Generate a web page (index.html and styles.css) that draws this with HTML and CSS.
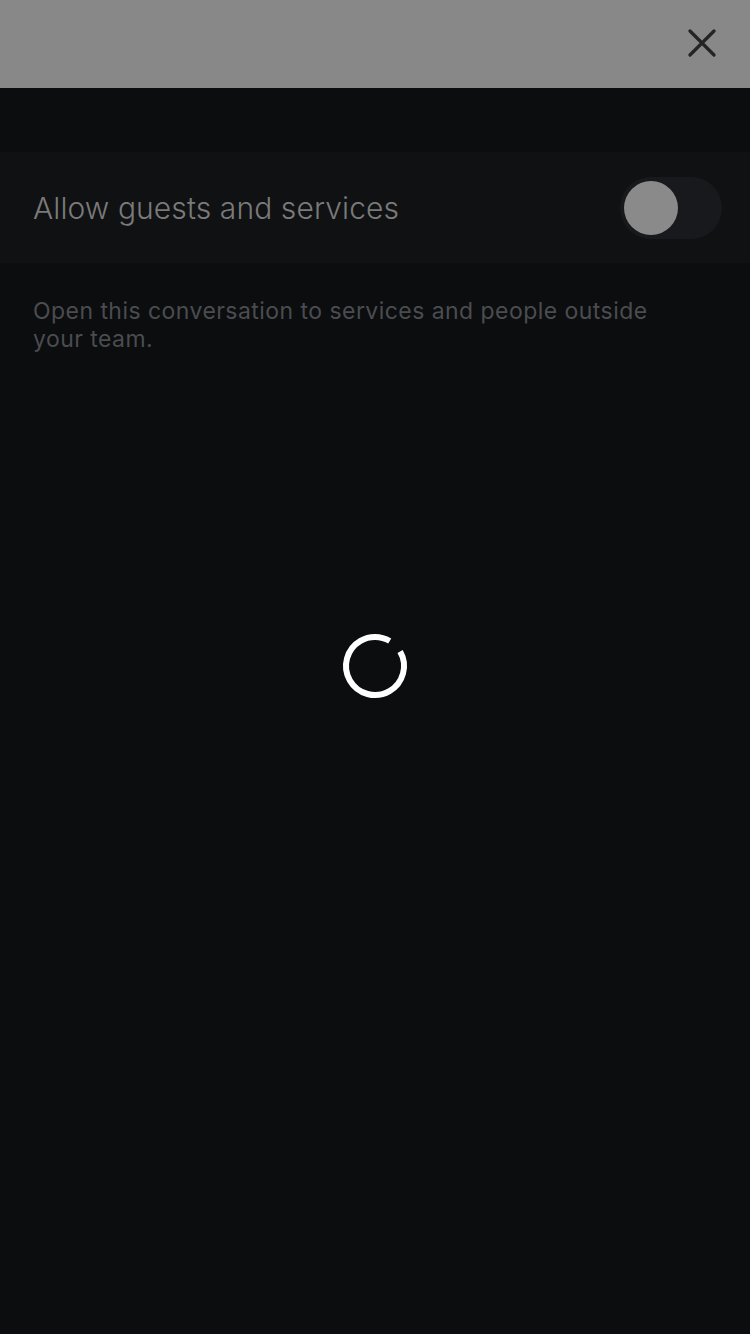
FILE: index.html
```html
<!DOCTYPE html>
<html>
<head>
<meta charset="utf-8">
<link rel="stylesheet" href="styles.css">
</head>
<body>
<div class="screen">
  <header class="topbar">
    <button class="close" aria-label="Close">
      <svg width="28" height="28" viewBox="0 0 28 28"><path d="M2 2 L26 26 M26 2 L2 26" stroke="#232425" stroke-width="3.2" stroke-linecap="round"/></svg>
    </button>
  </header>
  <div class="spacer"></div>
  <section class="row">
    <span class="label">Allow guests and services</span>
    <div class="toggle"><div class="knob"></div></div>
  </section>
  <p class="desc">Open this conversation to services and people outside your team.</p>
  <div class="loader">
    <svg width="70" height="70" viewBox="0 0 70 70"><circle cx="35" cy="35" r="29" fill="none" stroke="#fff" stroke-width="6" stroke-dasharray="167 15.2" transform="rotate(-30 35 35)"/></svg>
  </div>
</div>
</body>
</html>
```
FILE: styles.css
```css
html, body { margin: 0; padding: 0; }
body { background: #0c0d0f; font-family: "Inter", "Roboto", sans-serif; }
.screen { width: 750px; height: 1334px; display: flex; flex-direction: column; background: #0c0d0f; }
.topbar { height: 88px; background: #888888; display: flex; justify-content: flex-end; align-items: center; padding-right: 34px; box-sizing: border-box; }
.close { background: none; border: none; padding: 0; width: 28px; height: 28px; display: flex; margin-top: -2px; }
.spacer { height: 64px; }
.row { height: 111px; background: #101112; display: flex; align-items: center; justify-content: space-between; padding: 0 28px 0 33px; }
.label { font-size: 30px; font-weight: 300; color: #7a7a7a; letter-spacing: 0.1px; }
.toggle { width: 102px; height: 62px; border-radius: 31px; background: #18191c; display: flex; align-items: center; padding-left: 4px; box-sizing: border-box; }
.knob { width: 54px; height: 54px; border-radius: 50%; background: #8a8a8a; }
.desc { margin: 34px 80px 0 33px; font-size: 23px; line-height: 28px; color: #4a4c4f; font-weight: 400; letter-spacing: 0.45px; }
.loader { display: flex; justify-content: center; margin-top: 278px; }
```
